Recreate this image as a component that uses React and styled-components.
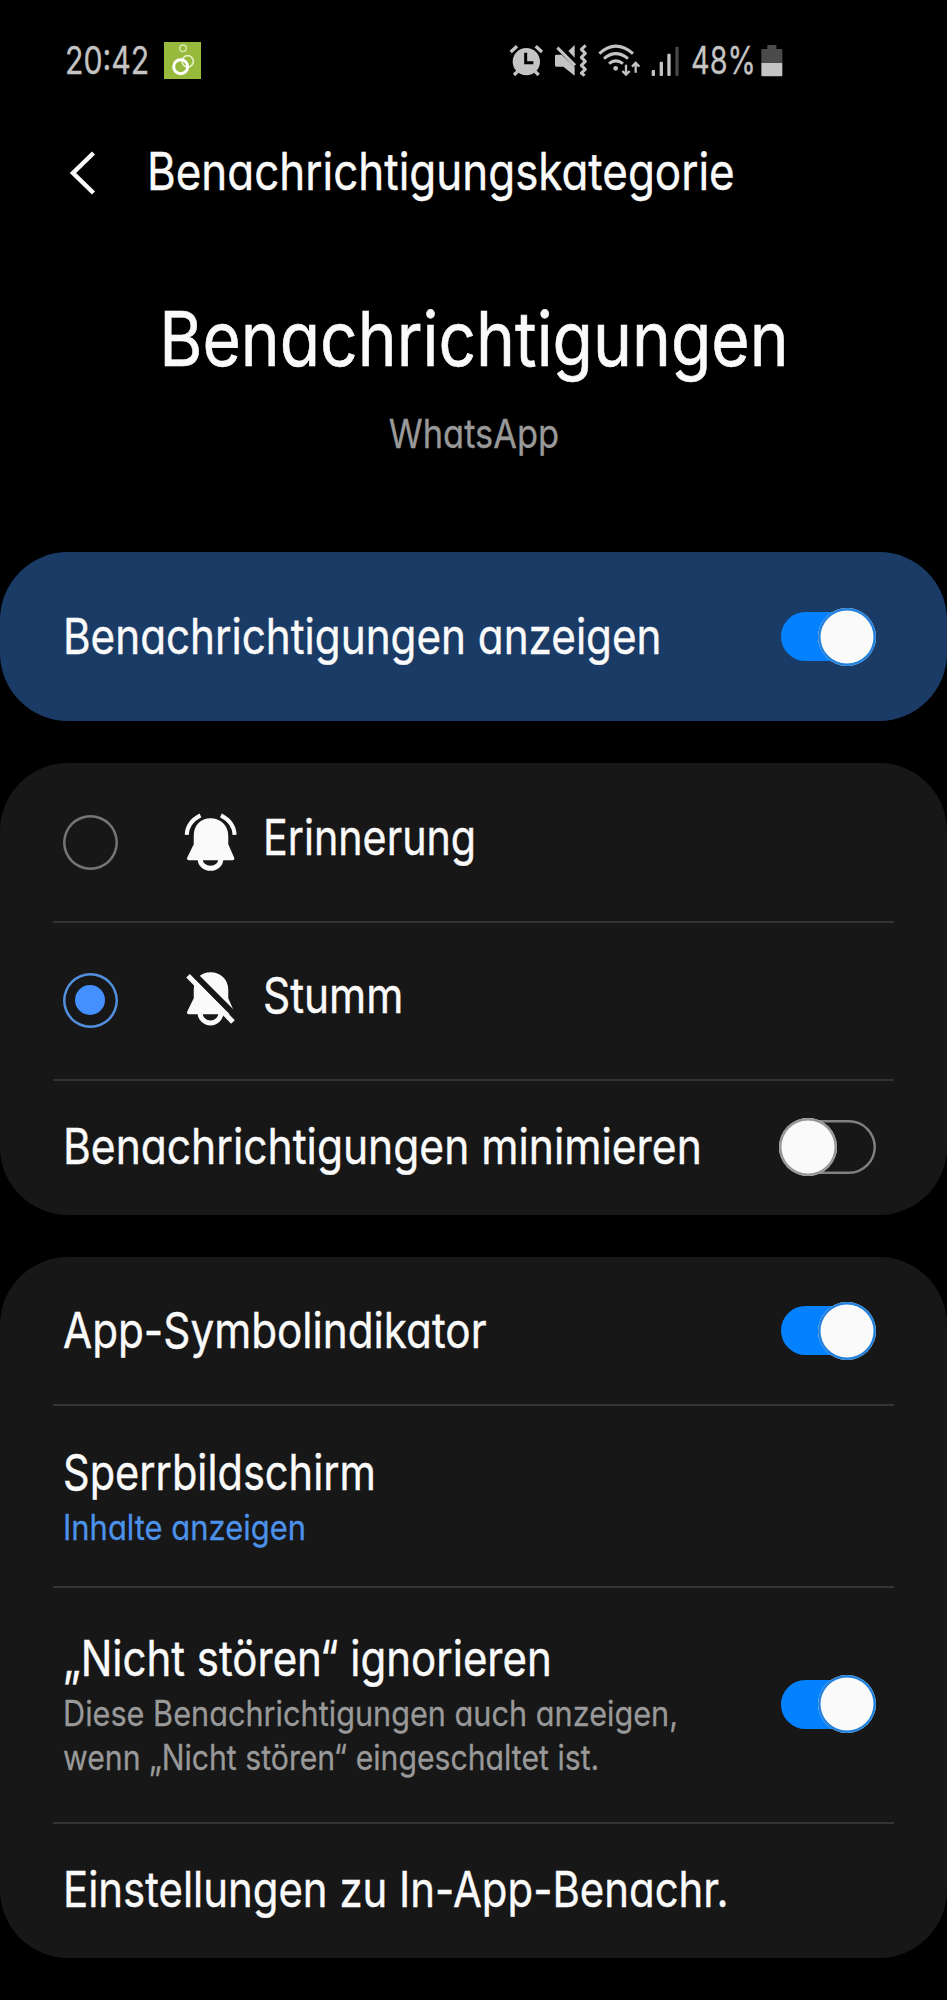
import React, { useState } from "react";
import styled, { createGlobalStyle } from "styled-components";

const GlobalStyle = createGlobalStyle`
  *, *::before, *::after {
    box-sizing: border-box;
  }
  body {
    margin: 0;
    background: #000;
    overflow-x: hidden;
  }
`;

const Screen = styled.div`
  width: 947px;
  height: 2000px;
  overflow: hidden;
  background: #000;
  color: #fafafa;
  font-family: "Inter", "Roboto", sans-serif;
  font-feature-settings: "cv11";
`;

// narrow letterforms: the text keeps its height and is squeezed sideways
const Text = styled.span`
  display: block;
  white-space: nowrap;
  font-size: ${({ $size }) => $size || 49}px;
  line-height: ${({ $line }) => $line || 58}px;
  color: ${({ $color }) => $color || "inherit"};
  -webkit-text-stroke: 0.008em;
  transform: scaleX(${({ $squeeze }) => $squeeze || 0.86});
  transform-origin: ${({ $origin }) => $origin || "left"} center;
`;

const StatusBar = styled.div`
  display: flex;
  align-items: center;
  height: 120px;
  padding: 0 164px 0 65px;
  color: #c4c4c4;
`;

const Clock = styled.div`
  width: 99px;
`;

const StatusIcons = styled.div`
  display: flex;
  align-items: center;
  gap: 10px;
  margin-left: auto;
`;

const Percent = styled.div`
  width: 70px;
  margin: 0 -10px 0 2px;
`;

const Header = styled.header`
  display: flex;
  align-items: center;
  height: 104px;
  padding-left: 68px;
`;

const BackButton = styled.button`
  width: 79px;
  height: 60px;
  padding: 0;
  border: none;
  background: none;
  color: inherit;
  text-align: left;
  cursor: pointer;
  svg {
    display: block;
  }
`;

const Hero = styled.section`
  display: flex;
  flex-direction: column;
  align-items: center;
  gap: 26px;
  height: 328px;
  padding-top: 68px;
`;

const Cards = styled.main`
  display: flex;
  flex-direction: column;
  gap: 42px;
`;

const Card = styled.section`
  border-radius: 68px;
  background: ${({ $accent }) => ($accent ? "#1b3b67" : "#171717")};
`;

const Row = styled.div`
  display: flex;
  align-items: center;
  height: ${({ $height }) => $height}px;
  padding: 0 71px ${({ $lift }) => $lift || 0}px 62.5px;
`;

const Divider = styled.div`
  height: 2px;
  margin: 0 53px;
  background: #333;
`;

const Labels = styled.div`
  flex: 1;
  min-width: 0;
`;

const Details = styled.div`
  margin-top: 3px;
`;

const OptionLabel = styled.div`
  margin: 0 0 8px 25px;
`;

const Track = styled.button`
  position: relative;
  flex: none;
  width: ${({ $on }) => ($on ? 95 : 97)}px;
  height: 58px;
  padding: 0;
  border: none;
  background: none;
  cursor: pointer;
  &::before {
    content: "";
    position: absolute;
    top: ${({ $on }) => ($on ? 4.5 : 2)}px;
    left: ${({ $on }) => ($on ? 0 : 4)}px;
    right: ${({ $on }) => ($on ? 4 : 0)}px;
    height: ${({ $on }) => ($on ? 49 : 54)}px;
    border-radius: 27px;
    box-shadow: ${({ $on }) => ($on ? "none" : "inset 0 0 0 2.5px #808080")};
    background: ${({ $on }) => ($on ? "#0381fe" : "transparent")};
  }
`;

const Thumb = styled.span`
  position: absolute;
  top: 0;
  left: ${({ $on }) => ($on ? "auto" : 0)};
  right: ${({ $on }) => ($on ? 0 : "auto")};
  width: 58px;
  height: 58px;
  border-radius: 50%;
  box-shadow: inset 0 0 0 2.5px ${({ $on }) => ($on ? "#2381dc" : "#969696")};
  background: #fafafa;
`;

const Radio = styled.button`
  display: flex;
  align-items: center;
  justify-content: center;
  flex: none;
  width: 55px;
  height: 55px;
  margin-right: 65.5px;
  padding: 0;
  border: none;
  border-radius: 50%;
  box-shadow: inset 0 0 0 2.5px ${({ $checked }) => ($checked ? "#528fdc" : "#757575")};
  background: none;
  cursor: pointer;
  &::after {
    content: "";
    width: 30px;
    height: 30px;
    border-radius: 50%;
    background: ${({ $checked }) => ($checked ? "#4490ff" : "transparent")};
  }
`;

const Switch = ({ initial }) => {
  const [on, setOn] = useState(initial);
  return (
    <Track type="button" $on={on} onClick={() => setOn(!on)}>
      <Thumb $on={on} />
    </Track>
  );
};

const AppBadge = () => (
  <svg width="37" height="37" viewBox="0 0 111 111">
    <rect width="111" height="111" fill="#97b93c" />
    <circle cx="57" cy="19" r="10" fill="none" stroke="#dcebb0" strokeWidth="4" />
    <circle cx="71" cy="58" r="17" fill="none" stroke="#e3efbf" strokeWidth="5" />
    <circle cx="50" cy="74" r="21" fill="none" stroke="#fff" strokeWidth="9" />
  </svg>
);

const AlarmIcon = () => (
  <svg width="34.7" height="33" viewBox="30 42 104 99" fill="none">
    <circle cx="82" cy="95" r="41" fill="#c4c4c4" />
    <path d="M35 66 54 49M110 49 129 66" stroke="#c4c4c4" strokeWidth="10" />
    <path d="M45 135 58 122M119 135 106 122" stroke="#c4c4c4" strokeWidth="10" />
    <path d="M80 68V98H103" stroke="#000" strokeWidth="9" />
  </svg>
);

const VibrateIcon = () => (
  <svg width="34" height="33" viewBox="165 42 102 99" fill="none">
    <path d="M172 74H188L227 111V137L193 110H172Q168 110 168 106V78Q168 74 172 74Z" fill="#c4c4c4" />
    <path d="M208 63 227 45V83Z" fill="#c4c4c4" />
    <path d="M175 53 228 106" stroke="#c4c4c4" strokeWidth="9" />
    <path
      d="M260 46 247 58 259 70 247 82 259 94 247 106 259 118 247 129 257 137"
      stroke="#c4c4c4"
      strokeWidth="9"
      strokeLinejoin="round"
    />
  </svg>
);

const WifiIcon = () => (
  <svg width="43" height="33" viewBox="297 42 129 99" fill="none" stroke="#c4c4c4">
    <path d="M301 71Q350 26 402 71" strokeWidth="9" />
    <path d="M315 86Q350 56 387 86" strokeWidth="9" />
    <path d="M330 101Q350 84 372 101" strokeWidth="9" />
    <circle cx="350" cy="115" r="7" fill="#c4c4c4" stroke="none" />
    <path d="M381 104V133M370 123 381 134 392 123" strokeWidth="7" />
    <path d="M410 128V99M399 110 410 99 421 110" strokeWidth="7" />
  </svg>
);

const SignalIcon = () => (
  <svg width="28.3" height="33" viewBox="455 42 85 99" fill="#c4c4c4">
    <rect x="457" y="120" width="10" height="18" rx="3" />
    <rect x="481" y="95" width="10" height="43" rx="3" />
    <rect x="504" y="71" width="10" height="67" rx="3" />
    <rect x="528" y="50" width="10" height="88" rx="3" fill="#464646" />
  </svg>
);

const BatteryIcon = () => (
  <svg width="21.7" height="33" viewBox="786 42 65 99">
    <path d="M805 45H832V57H847Q850 57 850 60V100H787V60Q787 57 790 57H805Z" fill="#4b4b4b" />
    <path d="M787 99H850V136Q850 139 847 139H790Q787 139 787 136Z" fill="#c4c4c4" />
  </svg>
);

const BackIcon = () => (
  <svg width="30" height="60" viewBox="0 0 30 60" fill="none">
    <path d="M25.5 11 5 31 25.5 51" stroke="#fafafa" strokeWidth="4.5" />
  </svg>
);

const BELL =
  "M511 113C540 113 564 133 564 165V190L582 231Q583 238 577 238H446Q440 238 441 231L461 190V165C461 133 482 113 511 113Z";

const BellIcon = () => (
  <svg width="55" height="59" viewBox="429 97 164 176" fill="none">
    <path d={BELL} fill="#fafafa" />
    <path d="M480 234A31 28 0 0 0 542 234" stroke="#fafafa" strokeWidth="15" />
    <path d="M440 162Q442 124 481 104M583 162Q581 124 542 104" stroke="#fafafa" strokeWidth="12" />
  </svg>
);

const BellOffIcon = () => (
  <svg width="55" height="59" viewBox="429 109 164 176" fill="none">
    <path d={BELL} fill="#fafafa" />
    <path d="M480 234A31 30 0 0 0 542 234" stroke="#fafafa" strokeWidth="15" />
    <path d="M456 113 596 253" stroke="#171717" strokeWidth="18" />
    <path d="M444 123 578 261" stroke="#fafafa" strokeWidth="15" />
  </svg>
);

const App = () => {
  const [mode, setMode] = useState("silent");

  return (
    <>
      <GlobalStyle />
      <Screen>
        <StatusBar>
          <Clock>
            <Text $size={38} $squeeze={0.797}>20:42</Text>
          </Clock>
          <AppBadge />
          <StatusIcons>
            <AlarmIcon />
            <VibrateIcon />
            <WifiIcon />
            <SignalIcon />
            <Percent>
              <Text $size={38} $squeeze={0.76}>48%</Text>
            </Percent>
            <BatteryIcon />
          </StatusIcons>
        </StatusBar>

        <Header>
          <BackButton type="button">
            <BackIcon />
          </BackButton>
          <Text $size={52} $squeeze={0.845}>Benachrichtigungskategorie</Text>
        </Header>

        <Hero>
          <Text $size={76} $line={92} $squeeze={0.867} $origin="center">
            Benachrichtigungen
          </Text>
          <Text $size={40} $line={48} $squeeze={0.86} $origin="center" $color="#999">
            WhatsApp
          </Text>
        </Hero>

        <Cards>
          <Card $accent>
            <Row $height={169}>
              <Labels>
                <Text $squeeze={0.861}>Benachrichtigungen anzeigen</Text>
              </Labels>
              <Switch initial />
            </Row>
          </Card>

          <Card>
            <Row $height={158}>
              <Radio type="button" $checked={mode === "alert"} onClick={() => setMode("alert")} />
              <BellIcon />
              <OptionLabel>
                <Text $squeeze={0.841}>Erinnerung</Text>
              </OptionLabel>
            </Row>
            <Divider />
            <Row $height={156} $lift={2}>
              <Radio type="button" $checked={mode === "silent"} onClick={() => setMode("silent")} />
              <BellOffIcon />
              <OptionLabel>
                <Text $squeeze={0.865}>Stumm</Text>
              </OptionLabel>
            </Row>
            <Divider />
            <Row $height={134} $lift={2}>
              <Labels>
                <Text $squeeze={0.868}>Benachrichtigungen minimieren</Text>
              </Labels>
              <Switch initial={false} />
            </Row>
          </Card>

          <Card>
            <Row $height={147}>
              <Labels>
                <Text $squeeze={0.862}>App-Symbolindikator</Text>
              </Labels>
              <Switch initial />
            </Row>
            <Divider />
            <Row $height={180}>
              <Labels>
                <Text $squeeze={0.848}>Sperrbildschirm</Text>
                <Details>
                  <Text $size={35} $line={44} $squeeze={0.884} $color="#4c92ea">
                    Inhalte anzeigen
                  </Text>
                </Details>
              </Labels>
            </Row>
            <Divider />
            <Row $height={234} $lift={2}>
              <Labels>
                <Text $squeeze={0.857}>„Nicht stören“ ignorieren</Text>
                <Details>
                  <Text $size={35} $line={44} $squeeze={0.876} $color="#999">
                    Diese Benachrichtigungen auch anzeigen,
                  </Text>
                  <Text $size={35} $line={44} $squeeze={0.863} $color="#999">
                    wenn „Nicht stören“ eingeschaltet ist.
                  </Text>
                </Details>
              </Labels>
              <Switch initial />
            </Row>
            <Divider />
            <Row $height={134} $lift={2}>
              <Labels>
                <Text $squeeze={0.855}>Einstellungen zu In-App-Benachr.</Text>
              </Labels>
            </Row>
          </Card>
        </Cards>
      </Screen>
    </>
  );
};

export default App;
